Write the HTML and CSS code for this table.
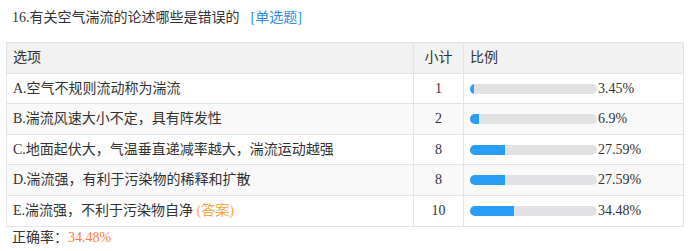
FILE: index.html
```html
<!DOCTYPE html>
<html lang="zh-CN">
<head>
<meta charset="utf-8">
<title>16</title>
<link rel="stylesheet" href="styles.css">
</head>
<body>
<div class="wrap">
  <div class="title">16.有关空气湍流的论述哪些是错误的<span class="type">[单选题]</span></div>
  <table class="stats">
    <thead>
      <tr><th class="c-opt">选项</th><th class="c-cnt">小计</th><th class="c-ratio">比例</th></tr>
    </thead>
    <tbody>
      <tr><td class="c-opt">A.空气不规则流动称为湍流</td><td class="c-cnt">1</td><td class="c-ratio"><span class="bar"><span class="fill" style="width:3.45%"></span></span>3.45%</td></tr>
      <tr class="alt"><td class="c-opt">B.湍流风速大小不定，具有阵发性</td><td class="c-cnt">2</td><td class="c-ratio"><span class="bar"><span class="fill" style="width:6.9%"></span></span>6.9%</td></tr>
      <tr><td class="c-opt">C.地面起伏大，气温垂直递减率越大，湍流运动越强</td><td class="c-cnt">8</td><td class="c-ratio"><span class="bar"><span class="fill" style="width:27.59%"></span></span>27.59%</td></tr>
      <tr class="alt"><td class="c-opt">D.湍流强，有利于污染物的稀释和扩散</td><td class="c-cnt">8</td><td class="c-ratio"><span class="bar"><span class="fill" style="width:27.59%"></span></span>27.59%</td></tr>
      <tr><td class="c-opt">E.湍流强，不利于污染物自净 <span class="answer">(答案)</span></td><td class="c-cnt">10</td><td class="c-ratio"><span class="bar"><span class="fill" style="width:34.48%"></span></span>34.48%</td></tr>
    </tbody>
  </table>
  <div class="rate">正确率：<span class="rate-val">34.48%</span></div>
</div>
</body>
</html>
```
FILE: styles.css
```css
html, body {
  margin: 0;
  padding: 0;
  background: #fff;
}
body {
  font-family: "Liberation Serif", "Noto Sans CJK SC", serif;
  font-size: 14px;
  color: #333;
}
.wrap {
  padding: 6px 7px 0 6px;
}
.title {
  padding: 2px 6px 0 6px;
  line-height: 20px;
  height: 34px;
}
.type {
  color: #2f8ee8;
  margin-left: 11px;
}
.stats {
  width: 678px;
  border-collapse: collapse;
  border: 1px solid #e4e4e4;
}
.stats th, .stats td {
  border: 1px solid #e4e4e4;
  padding: 5px 6px;
  line-height: 19.6px;
  font-weight: normal;
  text-align: left;
  white-space: nowrap;
}
.stats thead th {
  background: #f2f2f2;
}
.stats tr.alt td {
  background: #f9f9f9;
}
.c-opt { width: 394px; }
.stats td.c-cnt, .stats th.c-cnt {
  width: 37px;
  text-align: center;
}
.stats th.c-cnt { text-align: center; }
.bar {
  display: inline-block;
  vertical-align: -1px;
  width: 127px;
  height: 10px;
  border-radius: 5px;
  background: #e2e2e4;
  overflow: hidden;
  margin-right: 1px;
}
.fill {
  display: block;
  height: 100%;
  background: #2a9df4;
}
.answer {
  color: #f5a742;
}
.rate {
  padding-left: 6px;
  line-height: 20px;
  margin-top: 1px;
}
.rate-val {
  color: #fa7f3e;
}
```
